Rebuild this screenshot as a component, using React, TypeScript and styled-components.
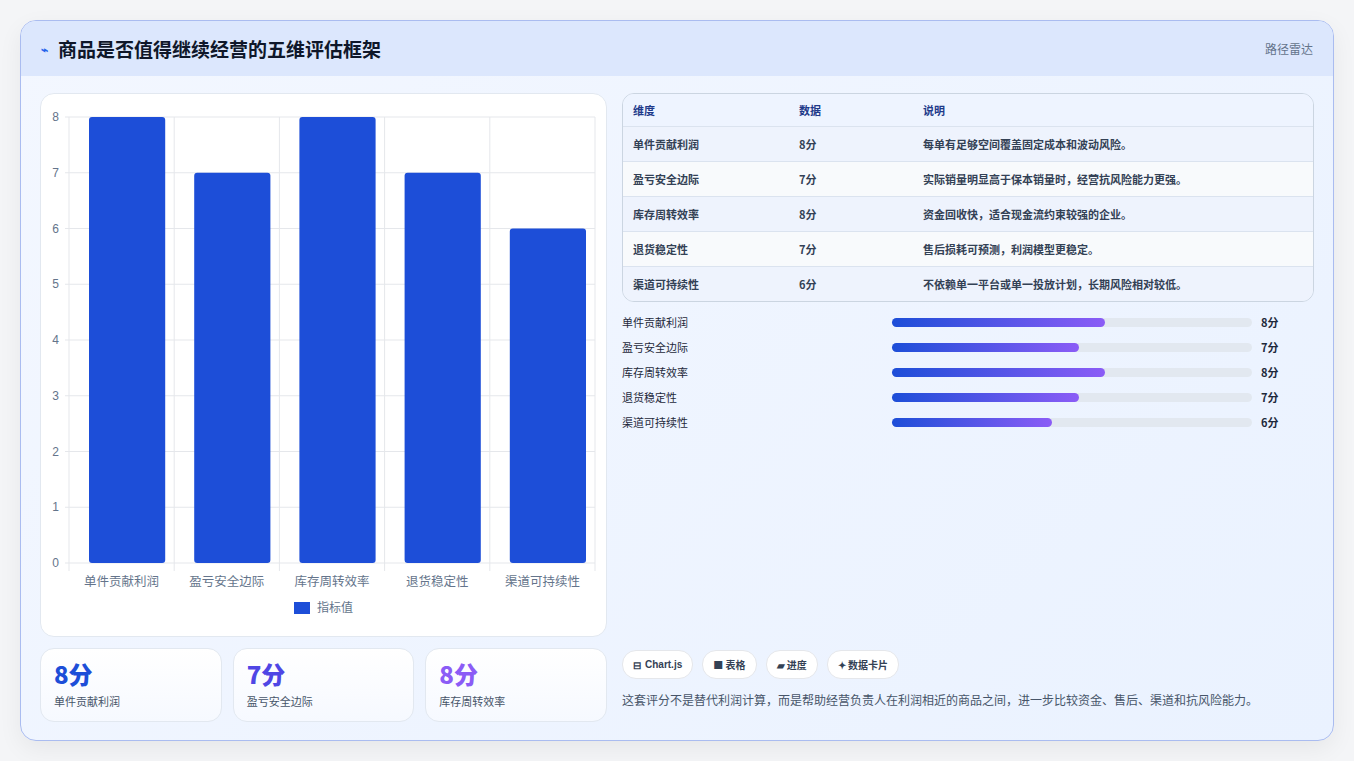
import React from "react";
import styled, { createGlobalStyle } from "styled-components";

const G = createGlobalStyle`
  body{margin:0;background:#f3f4f6;font-family:"Noto Sans CJK SC","Noto Sans",sans-serif;}
`;
const data = [
  { n: "单件贡献利润", v: 8, d: "每单有足够空间覆盖固定成本和波动风险。" },
  { n: "盈亏安全边际", v: 7, d: "实际销量明显高于保本销量时，经营抗风险能力更强。" },
  { n: "库存周转效率", v: 8, d: "资金回收快，适合现金流约束较强的企业。" },
  { n: "退货稳定性", v: 7, d: "售后损耗可预测，利润模型更稳定。" },
  { n: "渠道可持续性", v: 6, d: "不依赖单一平台或单一投放计划，长期风险相对较低。" },
];
const Page = styled.div`padding:20px 20px 20px 20px;height:761px;box-sizing:border-box;background:#f4f5f7;`;
const Card = styled.div`height:721px;box-sizing:border-box;border:1px solid #aabcf0;border-radius:16px;overflow:hidden;background:linear-gradient(135deg,#f3f7ff,#eaf2ff);display:flex;flex-direction:column;box-shadow:0 8px 24px rgba(0,0,0,.06);`;
const Head = styled.div`height:55px;flex:none;background:#dce7fd;display:flex;align-items:center;justify-content:space-between;padding:0 20px;`;
const Title = styled.div`font-size:19px;font-weight:700;color:#0f172a;display:flex;align-items:center;gap:10px;`;
const Tag = styled.div`font-size:12px;color:#64748b;`;
const Body = styled.div`flex:1;display:grid;grid-template-columns:567px 1fr;gap:15px;padding:17px 19px 19px 19px;`;
const Left = styled.div`display:flex;flex-direction:column;gap:11px;`;
const ChartBox = styled.div`height:544px;box-sizing:border-box;background:#fff;border:1px solid #e2e8f0;border-radius:14px;position:relative;`;
const Stats = styled.div`display:grid;grid-template-columns:repeat(3,1fr);gap:11px;`;
const Stat = styled.div`height:74px;box-sizing:border-box;background:linear-gradient(180deg,#fff,#f6f9ff);border:1px solid #e2e8f0;border-radius:14px;padding:10px 13px;`;
const Big = styled.div<{ c: string }>`font-size:24px;font-weight:800;color:${p => p.c};line-height:30px;`;
const Small = styled.div`font-size:11px;color:#475569;margin-top:4px;`;
const Right = styled.div`display:flex;flex-direction:column;`;
const Table = styled.div`border:1px solid #cbd5e1;border-radius:12px;overflow:hidden;`;
const Row = styled.div<{ h?: boolean; alt?: boolean }>`display:grid;grid-template-columns:166px 124px 1fr;padding-left:10px;height:${p => p.h ? 32 : 34}px;align-items:center;font-size:11px;font-weight:${p => p.h ? 700 : 600};color:${p => p.h ? "#1e3a8a" : "#334155"};background:${p => p.h ? "#eef4ff" : p.alt ? "#f8fafc" : "#eef3fd"};border-top:${p => p.h ? "none" : "1px solid #dbe3ef"};`;
const Bars = styled.div`display:flex;flex-direction:column;gap:9px;margin-top:12px;`;
const BRow = styled.div`display:grid;grid-template-columns:261px 360px auto;gap:9px;align-items:center;font-size:11px;color:#1e293b;height:16px;`;
const Track = styled.div`height:9px;border-radius:5px;background:#e2e8f0;`;
const Fill = styled.div`height:100%;border-radius:5px;background:linear-gradient(90deg,#1d4ed8,#8b5cf6);`;
const Val = styled.div`font-weight:700;`;
const Spacer = styled.div`flex:1;`;
const Chips = styled.div`display:flex;gap:9px;`;
const Chip = styled.div`height:27px;padding:0 10px;border-radius:14px;background:#fff;border:1px solid #e5e7eb;font-size:10px;font-weight:700;color:#334155;display:flex;align-items:center;gap:4px;`;
const Note = styled.div`font-size:12px;color:#475569;margin-top:12px;margin-bottom:14px;`;

function Chart() {
  const x0 = 28, x1 = 554, y0 = 23, y1 = 469, W = x1 - x0, cw = W / 5;
  return (
    <svg width="566" height="542" style={{ position: "absolute", left: 0, top: 0 }}>
      {[0, 1, 2, 3, 4, 5, 6, 7, 8].map(i => {
        const y = y1 - (i * (y1 - y0)) / 8;
        return <g key={i}><line x1={x0 - 4} x2={x1} y1={y} y2={y} stroke="#e5e7eb" /><text x={x0 - 10} y={y + 4} fontSize="12" fill="#64748b" textAnchor="end" fontFamily="Liberation Sans">{i}</text></g>;
      })}
      {[0, 1, 2, 3, 4, 5].map(i => <line key={i} x1={x0 + i * cw} x2={x0 + i * cw} y1={y0} y2={y1 + 8} stroke="#e5e7eb" />)}
      {data.map((d, i) => {
        const h = (d.v * (y1 - y0)) / 8;
        return <g key={i}>
          <rect x={x0 + i * cw + 20} y={y1 - h} width={cw - 29} height={h} rx="3" fill="#1d4ed8" />
          <text x={x0 + i * cw + cw / 2} y={y1 + 23} fontSize="12.5" fill="#64748b" textAnchor="middle" fontFamily="Noto Sans CJK SC">{d.n}</text>
        </g>;
      })}
      <rect x="253" y="508" width="16" height="12" fill="#1d4ed8" />
      <text x="276" y="518" fontSize="12" fill="#64748b" fontFamily="Noto Sans CJK SC">指标值</text>
    </svg>
  );
}

export default function App() {
  return (
    <Page>
      <G />
      <Card>
        <Head>
          <Title><span style={{ color: "#2563eb", fontSize: 12 }}>⌁</span>商品是否值得继续经营的五维评估框架</Title>
          <Tag>路径雷达</Tag>
        </Head>
        <Body>
          <Left>
            <ChartBox><Chart /></ChartBox>
            <Stats>
              <Stat><Big c="#1d4ed8">8分</Big><Small>单件贡献利润</Small></Stat>
              <Stat><Big c="#4f46e5">7分</Big><Small>盈亏安全边际</Small></Stat>
              <Stat><Big c="#8b5cf6">8分</Big><Small>库存周转效率</Small></Stat>
            </Stats>
          </Left>
          <Right>
            <Table>
              <Row h><span>维度</span><span>数据</span><span>说明</span></Row>
              {data.map((d, i) => <Row key={i} alt={i % 2 === 1}><span>{d.n}</span><span>{d.v}分</span><span>{d.d}</span></Row>)}
            </Table>
            <Bars>
              {data.map((d, i) => <BRow key={i}><span>{d.n}</span><Track><Fill style={{ width: `${(d.v / 13.5) * 100}%` }} /></Track><Val>{d.v}分</Val></BRow>)}
            </Bars>
            <Spacer />
            <Chips>
              <Chip>⊟ <span style={{ fontFamily: "Liberation Sans" }}>Chart.js</span></Chip>
              <Chip>■ 表格</Chip>
              <Chip>▰ 进度</Chip>
              <Chip>✦ 数据卡片</Chip>
            </Chips>
            <Note>这套评分不是替代利润计算，而是帮助经营负责人在利润相近的商品之间，进一步比较资金、售后、渠道和抗风险能力。</Note>
          </Right>
        </Body>
      </Card>
    </Page>
  );
}
